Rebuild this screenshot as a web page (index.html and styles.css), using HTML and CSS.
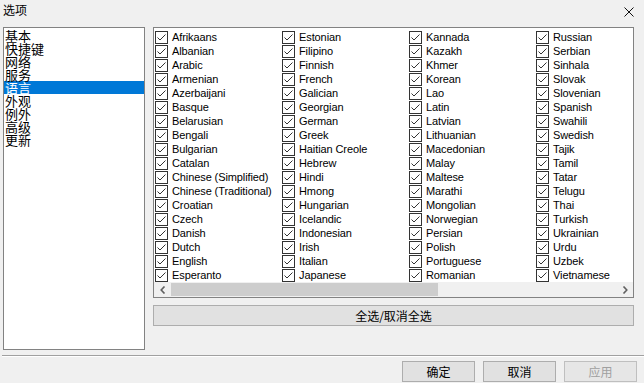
FILE: index.html
```html
<!DOCTYPE html>
<html lang="zh">
<head>
<meta charset="utf-8">
<title>选项</title>
<link rel="stylesheet" href="styles.css">
</head>
<body>
<svg class="defs" width="0" height="0" aria-hidden="true">
  <symbol id="chk" viewBox="0 0 13 13">
    <rect x="0.5" y="0.5" width="12" height="12" fill="#fff" stroke="#333"/>
    <polyline points="2.5,6.5 5,9 10.5,3.5" fill="none" stroke="#333" stroke-width="1"/>
  </symbol>
</svg>
<div class="window">
  <div class="titlebar">
    <span class="title">选项</span>
    <svg class="close" width="10" height="10" viewBox="0 0 10 10"><path d="M0.5 0.5 L9.5 9.5 M9.5 0.5 L0.5 9.5" stroke="#111" stroke-width="1"/></svg>
  </div>
  <div class="main">
    <ul class="nav">
      <li>基本</li>
      <li>快捷键</li>
      <li>网络</li>
      <li>服务</li>
      <li class="sel">语言</li>
      <li>外观</li>
      <li>例外</li>
      <li>高级</li>
      <li>更新</li>
    </ul>
    <div class="content">
      <div class="listbox">
        <div class="grid">
          <label class="item"><svg class="cb"><use href="#chk"/></svg>Afrikaans</label>
          <label class="item"><svg class="cb"><use href="#chk"/></svg>Albanian</label>
          <label class="item"><svg class="cb"><use href="#chk"/></svg>Arabic</label>
          <label class="item"><svg class="cb"><use href="#chk"/></svg>Armenian</label>
          <label class="item"><svg class="cb"><use href="#chk"/></svg>Azerbaijani</label>
          <label class="item"><svg class="cb"><use href="#chk"/></svg>Basque</label>
          <label class="item"><svg class="cb"><use href="#chk"/></svg>Belarusian</label>
          <label class="item"><svg class="cb"><use href="#chk"/></svg>Bengali</label>
          <label class="item"><svg class="cb"><use href="#chk"/></svg>Bulgarian</label>
          <label class="item"><svg class="cb"><use href="#chk"/></svg>Catalan</label>
          <label class="item"><svg class="cb"><use href="#chk"/></svg>Chinese (Simplified)</label>
          <label class="item"><svg class="cb"><use href="#chk"/></svg>Chinese (Traditional)</label>
          <label class="item"><svg class="cb"><use href="#chk"/></svg>Croatian</label>
          <label class="item"><svg class="cb"><use href="#chk"/></svg>Czech</label>
          <label class="item"><svg class="cb"><use href="#chk"/></svg>Danish</label>
          <label class="item"><svg class="cb"><use href="#chk"/></svg>Dutch</label>
          <label class="item"><svg class="cb"><use href="#chk"/></svg>English</label>
          <label class="item"><svg class="cb"><use href="#chk"/></svg>Esperanto</label>
          <label class="item"><svg class="cb"><use href="#chk"/></svg>Estonian</label>
          <label class="item"><svg class="cb"><use href="#chk"/></svg>Filipino</label>
          <label class="item"><svg class="cb"><use href="#chk"/></svg>Finnish</label>
          <label class="item"><svg class="cb"><use href="#chk"/></svg>French</label>
          <label class="item"><svg class="cb"><use href="#chk"/></svg>Galician</label>
          <label class="item"><svg class="cb"><use href="#chk"/></svg>Georgian</label>
          <label class="item"><svg class="cb"><use href="#chk"/></svg>German</label>
          <label class="item"><svg class="cb"><use href="#chk"/></svg>Greek</label>
          <label class="item"><svg class="cb"><use href="#chk"/></svg>Haitian Creole</label>
          <label class="item"><svg class="cb"><use href="#chk"/></svg>Hebrew</label>
          <label class="item"><svg class="cb"><use href="#chk"/></svg>Hindi</label>
          <label class="item"><svg class="cb"><use href="#chk"/></svg>Hmong</label>
          <label class="item"><svg class="cb"><use href="#chk"/></svg>Hungarian</label>
          <label class="item"><svg class="cb"><use href="#chk"/></svg>Icelandic</label>
          <label class="item"><svg class="cb"><use href="#chk"/></svg>Indonesian</label>
          <label class="item"><svg class="cb"><use href="#chk"/></svg>Irish</label>
          <label class="item"><svg class="cb"><use href="#chk"/></svg>Italian</label>
          <label class="item"><svg class="cb"><use href="#chk"/></svg>Japanese</label>
          <label class="item"><svg class="cb"><use href="#chk"/></svg>Kannada</label>
          <label class="item"><svg class="cb"><use href="#chk"/></svg>Kazakh</label>
          <label class="item"><svg class="cb"><use href="#chk"/></svg>Khmer</label>
          <label class="item"><svg class="cb"><use href="#chk"/></svg>Korean</label>
          <label class="item"><svg class="cb"><use href="#chk"/></svg>Lao</label>
          <label class="item"><svg class="cb"><use href="#chk"/></svg>Latin</label>
          <label class="item"><svg class="cb"><use href="#chk"/></svg>Latvian</label>
          <label class="item"><svg class="cb"><use href="#chk"/></svg>Lithuanian</label>
          <label class="item"><svg class="cb"><use href="#chk"/></svg>Macedonian</label>
          <label class="item"><svg class="cb"><use href="#chk"/></svg>Malay</label>
          <label class="item"><svg class="cb"><use href="#chk"/></svg>Maltese</label>
          <label class="item"><svg class="cb"><use href="#chk"/></svg>Marathi</label>
          <label class="item"><svg class="cb"><use href="#chk"/></svg>Mongolian</label>
          <label class="item"><svg class="cb"><use href="#chk"/></svg>Norwegian</label>
          <label class="item"><svg class="cb"><use href="#chk"/></svg>Persian</label>
          <label class="item"><svg class="cb"><use href="#chk"/></svg>Polish</label>
          <label class="item"><svg class="cb"><use href="#chk"/></svg>Portuguese</label>
          <label class="item"><svg class="cb"><use href="#chk"/></svg>Romanian</label>
          <label class="item"><svg class="cb"><use href="#chk"/></svg>Russian</label>
          <label class="item"><svg class="cb"><use href="#chk"/></svg>Serbian</label>
          <label class="item"><svg class="cb"><use href="#chk"/></svg>Sinhala</label>
          <label class="item"><svg class="cb"><use href="#chk"/></svg>Slovak</label>
          <label class="item"><svg class="cb"><use href="#chk"/></svg>Slovenian</label>
          <label class="item"><svg class="cb"><use href="#chk"/></svg>Spanish</label>
          <label class="item"><svg class="cb"><use href="#chk"/></svg>Swahili</label>
          <label class="item"><svg class="cb"><use href="#chk"/></svg>Swedish</label>
          <label class="item"><svg class="cb"><use href="#chk"/></svg>Tajik</label>
          <label class="item"><svg class="cb"><use href="#chk"/></svg>Tamil</label>
          <label class="item"><svg class="cb"><use href="#chk"/></svg>Tatar</label>
          <label class="item"><svg class="cb"><use href="#chk"/></svg>Telugu</label>
          <label class="item"><svg class="cb"><use href="#chk"/></svg>Thai</label>
          <label class="item"><svg class="cb"><use href="#chk"/></svg>Turkish</label>
          <label class="item"><svg class="cb"><use href="#chk"/></svg>Ukrainian</label>
          <label class="item"><svg class="cb"><use href="#chk"/></svg>Urdu</label>
          <label class="item"><svg class="cb"><use href="#chk"/></svg>Uzbek</label>
          <label class="item"><svg class="cb"><use href="#chk"/></svg>Vietnamese</label>
        </div>
        <div class="hscroll">
          <span class="arrow"><svg width="6" height="8" viewBox="0 0 6 8"><path d="M4.5 0.5 L1.2 4 L4.5 7.5" fill="none" stroke="#606060" stroke-width="1.6"/></svg></span>
          <div class="track"><div class="thumb"></div></div>
          <span class="arrow"><svg width="6" height="8" viewBox="0 0 6 8"><path d="M1.5 0.5 L4.8 4 L1.5 7.5" fill="none" stroke="#606060" stroke-width="1.6"/></svg></span>
        </div>
      </div>
      <button class="btn wide">全选/取消全选</button>
    </div>
  </div>
  <div class="sep"></div>
  <div class="footer">
    <button class="btn">确定</button>
    <button class="btn">取消</button>
    <button class="btn" disabled>应用</button>
  </div>
</div>
</body>
</html>
```

FILE: styles.css
```css
* { box-sizing: border-box; }
html, body { margin: 0; padding: 0; }
body {
  width: 644px;
  height: 383px;
  overflow: hidden;
  background: #f0f0f0;
  font-family: "Liberation Sans", "Noto Sans CJK SC", sans-serif;
  font-size: 11px;
  color: #000;
}
.defs { position: absolute; width: 0; height: 0; }
.window { width: 644px; height: 383px; display: flex; flex-direction: column; }
.titlebar {
  height: 27px;
  display: flex;
  align-items: flex-start;
  justify-content: space-between;
  padding: 3px 10px 0 3px;
}
.title {
  font-family: "Noto Sans CJK SC", sans-serif;
  font-size: 12px;
  line-height: 14px;
}
.close { margin-top: 4px; }
.main {
  display: flex;
  gap: 8px;
  padding-left: 3px;
  height: 323px;
}
.nav {
  list-style: none;
  margin: 0;
  padding: 1px 0 0 0;
  width: 142px;
  height: 323px;
  background: #fff;
  border: 1px solid #828282;
  font-family: "Noto Sans CJK SC", sans-serif;
  font-size: 13px;
  line-height: 13px;
}
.nav li { height: 13px; padding-left: 1px; white-space: nowrap; }
.nav li.sel { background: #0078d7; color: #fff; }
.content {
  width: 481px;
  display: flex;
  flex-direction: column;
  gap: 7px;
}
.listbox {
  height: 271px;
  background: #fff;
  border: 1px solid #828282;
  display: flex;
  flex-direction: column;
}
.grid {
  display: grid;
  grid-template-columns: repeat(4, 127px);
  grid-template-rows: repeat(18, 14px);
  grid-auto-flow: column;
  padding: 2px 0 0 1px;
  height: 254px;
}
.item {
  display: flex;
  align-items: center;
  gap: 4px;
  white-space: nowrap;
  line-height: 14px;
  letter-spacing: -0.1px;
}
.cb { width: 13px; height: 13px; flex: none; }
.hscroll {
  height: 15px;
  display: flex;
  background: #f0f0f0;
}
.arrow {
  width: 17px;
  display: flex;
  align-items: center;
  justify-content: center;
}
.track { flex: 1; display: flex; align-items: stretch; padding: 1px 0; }
.thumb { width: 267px; background: #cdcdcd; }
.btn {
  font-family: "Noto Sans CJK SC", sans-serif;
  font-size: 12px;
  line-height: 16px;
  color: #000;
  background: #e1e1e1;
  border: 1px solid #adadad;
  border-radius: 0;
  padding: 0;
  margin: 0;
}
.wide { height: 21px; width: 481px; }
.sep {
  margin: 5px 0 0 2px;
  height: 2px;
  border-top: 1px solid #a0a0a0;
  border-bottom: 1px solid #fff;
}
.footer {
  display: flex;
  justify-content: flex-end;
  gap: 8px;
  padding: 4px 7px 0 0;
}
.footer .btn { width: 73px; height: 21px; }
.btn:disabled { color: #a0a0a0; border-color: #bfbfbf; background: #e6e6e6; }
```
